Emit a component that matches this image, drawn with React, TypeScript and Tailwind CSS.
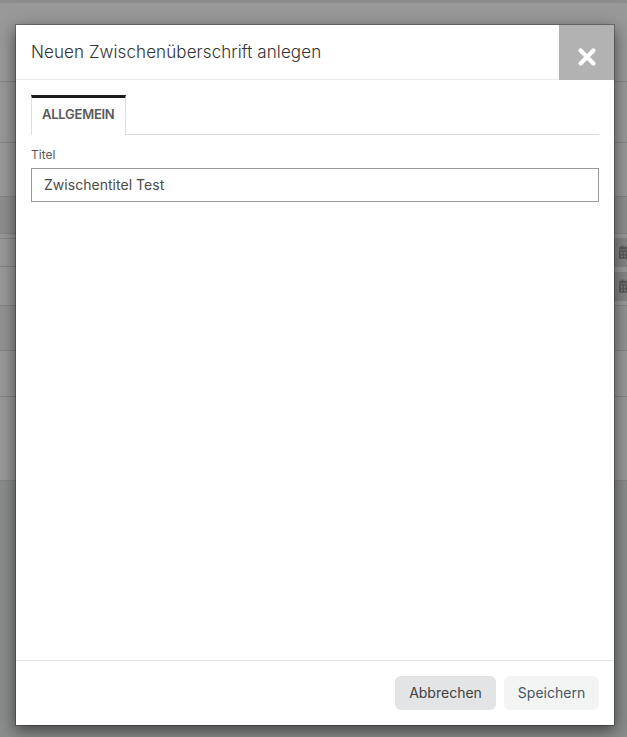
import React, { useState } from 'react';
import { FaCalendarAlt } from 'react-icons/fa';

// Table rows of the page behind the dialog
const rows = [
  'h-[79px] bg-[#999999]',
  'h-[61px] bg-[#999999]',
  'h-[54px] bg-[#999999]',
  'h-[37px] bg-[#8f8f8f]',
  'h-[5px] bg-[#999999]',
  'h-[28px] bg-[#999999]',
  'h-[39px] bg-[#999999]',
  'h-[45px] bg-[#939393]',
  'h-[46px] bg-[#999999]',
  'h-[84px] bg-[#999999]',
];

const Backdrop = () => (
  <div className="h-full bg-[#8a8d8b] pt-[3px]">
    {rows.map((row, i) => (
      <div key={i} className={`border-b border-[#858585] ${row}`} />
    ))}
  </div>
);

const RowActions = () => (
  <div className="absolute right-0 top-[238px] flex w-[13px] flex-col gap-[5px]">
    {[0, 1].map((i) => (
      <div key={i} className="flex h-[29px] items-center overflow-hidden bg-[#858585] pb-[2px] pl-[5px]">
        <FaCalendarAlt className="h-[14px] w-[12px] shrink-0 text-[#5a5a5a]" />
      </div>
    ))}
  </div>
);

export default function App() {
  const [title, setTitle] = useState('Zwischentitel Test');

  return (
    <div className="relative h-[737px] w-[627px] overflow-hidden font-['Inter',sans-serif]">
      <Backdrop />
      <RowActions />
      <div className="absolute inset-0 pl-[15px] pr-3 pt-6">
        <div
          role="dialog"
          className="flex h-[702px] flex-col border border-black/25 bg-white bg-clip-padding shadow-[0_5px_15px_rgba(0,0,0,0.5)]"
        >
          <header className="flex h-[55px] shrink-0 border-b border-[#eaeaea]">
            <h4 className="flex-1 pl-[15px] pt-[15px] text-[17px] font-light leading-6 tracking-[0.09px] text-[#333333]">
              Neuen Zwischenüberschrift anlegen
            </h4>
            <button className="flex h-[55px] w-[55px] items-center justify-center bg-[#b2b2b2] pt-[8px]" aria-label="Schließen">
              <svg viewBox="0 0 18 18" className="h-[18px] w-[18px]" fill="none" stroke="white" strokeWidth="4.2" strokeLinecap="round">
                <path d="M2.6 2.6 15.4 15.4M15.4 2.6 2.6 15.4" />
              </svg>
            </button>
          </header>

          <main className="flex-1 p-[15px]">
            <div className="flex h-10">
              <div className="w-[95px] border-x border-t-[3px] border-x-[#dddddd] border-t-[#1a1a1a] pl-[10px] pt-[6px] text-[13px] font-semibold leading-5 tracking-[-0.25px] text-[#5a5a5a]">
                ALLGEMEIN
              </div>
              <div className="flex-1 border-b border-[#dddddd]" />
            </div>
            <label className="mt-[11px] block text-[12px] leading-[18px] text-[#5a5a5a]" htmlFor="titel">
              Titel
            </label>
            <input
              id="titel"
              value={title}
              onChange={(e) => setTitle(e.target.value)}
              className="mt-[4px] block h-[34px] w-full border border-[#999999] px-3 pb-[2px] text-[14px] tracking-[0.03px] text-[#4a4a4a] outline-none"
            />
          </main>

          <footer className="flex h-[65px] shrink-0 justify-end gap-2 border-t border-[#e5e5e5] p-[15px]">
            <button className="h-[34px] w-[101px] rounded-md bg-[#e3e4e6] pb-[1px] text-[14px] text-[#404040]">Abbrechen</button>
            <button className="h-[34px] w-[95px] rounded-md bg-[#f3f5f5] pb-[1px] text-[14px] text-[#465462]">Speichern</button>
          </footer>
        </div>
      </div>
    </div>
  );
}
